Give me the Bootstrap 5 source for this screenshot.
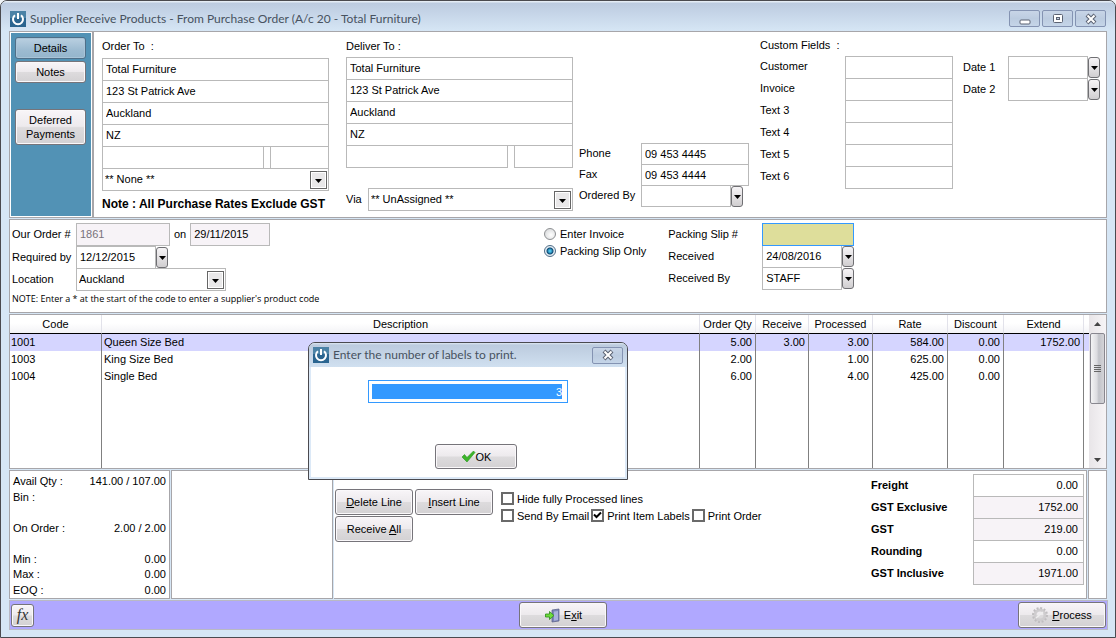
<!DOCTYPE html>
<html lang="en">
<head>
<meta charset="utf-8">
<meta name="viewport" content="width=device-width, initial-scale=1">
<title>Supplier Receive Products</title>
<link href="https://cdn.jsdelivr.net/npm/bootstrap@5.3.0/dist/css/bootstrap.min.css" rel="stylesheet">
<style>
  :root { --line: #a7a6aa; --field: #b9b9b9; --frame: #d6e6f5; --edge: #4a4a4f; }
  body { font: 11px/14px "Liberation Sans", Arial, sans-serif; color: #000; background: #f0f4f8; }
  input, select, button { font: inherit; color: inherit; }
  .app-window { min-height: 100vh; border: 1px solid var(--edge); border-radius: 7px 7px 0 0; background: var(--frame); padding: 0 8px 7px; }
  .title-bar { height: 30px; margin: 0 -8px; padding: 5px 9px 0 9px; border-radius: 6px 6px 0 0; background: linear-gradient(#e4ecf5 0 1px, #bccbe0 2px, var(--frame)); color: #47525f; }
  .title-text { font: 12px/16px Lato, "Open Sans", sans-serif; color: #47525f; }
  .caption-set { gap: 2px; }
  .caption-btn { width: 31px; height: 17px; padding: 0; border: 1px solid #8493b2; border-radius: 2px; background: linear-gradient(#c8d5e7, #bccce0 50%, #c5d5e8); display: flex; align-items: center; justify-content: center; }
  .pane { background: #fff; border: 1px solid var(--line); }
  .stack { gap: 1px; }
  .side { width: 84px; padding: 1px; }
  .side-inner { background: #5292b5; padding: 4px 5px 4px 4px; gap: 2px; }
  .ui-btn { border: 1px solid #76747a; border-radius: 3px; padding: 0; background: linear-gradient(#f8f5f8, #edeaed 48%, #dddbdd 52%, #d3d1d3); box-shadow: inset 0 0 0 1px #faf8fa; text-align: center; min-height: 22px; }
  .ui-btn.current { background: linear-gradient(#bad0e1, #9dbbd1 60%, #94b5cc); border-color: #4f6f88; box-shadow: inset 0 0 0 1px #a9c4d8; }
  .two-line { height: 36px; }
  .tall { height: 26px; }
  .w-action { width: 78px; }
  .w-main { width: 88px; }
  .fld { display: block; height: 23px; border: 1px solid var(--field); border-radius: 0; background: #fff; padding: 0 3px 1px; min-width: 0; outline: 0; }
  .fld.locked { background: #f7f3f7; }
  .fld.dim { color: #77727a; }
  .fld + .fld, .fld-row + .fld, .fld + .fld-row, .fld-row + .fld-row { margin-top: -1px; }
  .combo { appearance: none; padding: 0 22px 1px 2px; background: #fff url("data:image/svg+xml,%3Csvg xmlns='http://www.w3.org/2000/svg' width='17' height='18'%3E%3Crect x='.5' y='.5' width='16' height='17' fill='%23e9e8e9' stroke='%23666'/%3E%3Crect x='1.5' y='1.5' width='14' height='15' fill='none' stroke='%23fff'/%3E%3Cpath d='M5 8h7l-3.5 4z'/%3E%3C/svg%3E") no-repeat right 1px center; }
  .drop { width: 12px; height: 21px; margin-top: 1px; padding: 0; border: 1px solid #6f6f73; border-radius: 3px; background: linear-gradient(#f6f4f6, #e4e2e4 50%, #d0ced0); display: flex; align-items: center; justify-content: center; flex: none; }
  .order-head { padding: 0 2px 6px 8px; }
  .party { width: 227px; padding-top: 7px; }
  .party-title { margin-bottom: 5px; }
  .deliver { margin-left: 17px; }
  .deliver .party-title { margin-bottom: 4px; }
  .rate-note { font-size: 12px; padding-top: 6px; }
  .lab { line-height: 22px; }
  .part-a { width: 162px; }
  .part-b { width: 59px; }
  .via-row { padding-top: 20px; }
  .w-via { width: 205px; }
  .contact { display: grid; grid-template-columns: 62px 108px; margin: 0 0 4px 6px; }
  .contact .fld { height: 22px; margin: 0 0 -1px; }
  .contact .lab { line-height: 20px; }
  .w-drop { width: 90px; }
  .extra { padding-top: 6px; }
  .custom { display: grid; grid-template-columns: 85px 108px; grid-auto-rows: 22px; }
  .custom .lab { line-height: 20px; }
  .dates { display: grid; grid-template-columns: 45px 80px 12px; grid-auto-rows: 22px; margin: 0 4px 0 10px; }
  .order-pane { padding-bottom: 6px; }
  .entry { padding-top: 3px; }
  .order-form { width: 534px; padding-left: 2px; }
  .ref { width: 94px; }
  .w-lab { width: 64px; }
  .w-date { width: 80px; }
  .w-loc { width: 150px; }
  .hint { font: 9px/14px "Open Sans", sans-serif; padding-top: 1px; }
  .kinds { padding-top: 7px; display: flex; flex-direction: column; gap: 3px; }
  .slip { display: grid; grid-template-columns: 94px 80px 12px; grid-auto-rows: 22px; margin-left: 22px; }
  .slip .wanted { grid-column: 2 / 4; background: #dede9b; border-color: #3399ff; position: relative; }
  .radio { appearance: none; width: 12px; height: 12px; margin: 0; border: 1px solid #8d8f92; border-radius: 50%; background: radial-gradient(circle at 60% 60%, #fff, #d0d2d4); flex: none; }
  .radio:checked { border-color: #4e6c86; background: radial-gradient(circle, #49c1ea 0 1px, #0c4a75 3px, #e6eef4 4px); }
  .tick { appearance: none; width: 13px; height: 13px; margin: 0; border: 2px solid #6a6a6a; background: #fff; flex: none; }
  .tick:checked { background: #fff url("data:image/svg+xml,%3Csvg xmlns='http://www.w3.org/2000/svg' width='9' height='9'%3E%3Cpath d='M1 3.5l2.5 2.5L8 1.5' fill='none' stroke='%23000' stroke-width='2'/%3E%3C/svg%3E") center no-repeat; }
  .lines { table-layout: fixed; border-collapse: separate; border-spacing: 0; }
  .col-code { width: 92px; } .col-qty, .col-disc { width: 56px; } .col-recv { width: 53px; } .col-proc { width: 64px; } .col-rate { width: 75px; } .col-ext { width: 80px; } .col-end { width: 5px; }
  .lines th { height: 19px; font-weight: 400; text-align: center; padding: 0; background: linear-gradient(#fff 45%, #f3f3f6); border-bottom: 1px solid #000; border-right: 1px solid #e2e2ea; line-height: 16px; }
  .lines td { height: 17px; line-height: 17px; padding: 0 3px 0 2px; border-right: 1px solid #808080; white-space: nowrap; }
  .lines td.num { text-align: right; }
  .lines td:first-child { padding-left: 1px; }
  .lines td:last-child, .lines th:last-child { border-right: 0; }
  .lines .picked td { background: #d5d5ff; }
  .lines .rest td { height: auto; }
  .scroller { width: 17px; background: linear-gradient(90deg, #e8e5e8, #f6f4f6); }
  .scroll-thumb { width: 15px; height: 71px; border: 1px solid #88878f; border-radius: 2px; background: linear-gradient(90deg, #f4f4f5, #dcdce0 45%, #c2c3c9 60%, #d4d4d8); display: flex; align-items: center; justify-content: center; }
  .stock { width: 161px; padding: 3px 3px 0; }
  .stock dl { display: grid; grid-template-columns: auto 1fr; grid-template-rows: repeat(4, 16px 15px); margin: 0; }
  .stock dt { font-weight: 400; }
  .stock dd { margin: 0; text-align: right; }
  .notes { width: 162px; }
  .work { border-left: 0; }
  .acts { padding: 18px 0 0 1px; gap: 1px; }
  .acts-row { gap: 2px; }
  .ticks { padding: 19px 0 0 8px; }
  .ticks span { padding-left: 3px; }
  .ticks label { height: 17px; }
  .tick-row { gap: 2px; }
  .totals { display: grid; grid-template-columns: 102px 111px; grid-auto-rows: 22px; padding: 3px 2px 13px 0; }
  .totals .fld, .custom .fld, .dates .fld, .slip .fld { margin: 0; width: 100%; }
  .totals .fld { text-align: right; padding-right: 5px; }
  .gutter { width: 19px; }
  .command-bar { background: #b0a8ff; border: 1px solid #b9b9c4; margin-right: -1px; padding: 1px; display: grid; grid-template-columns: 1.02fr 88px 1fr; min-height: 30px; }
  .fx { width: 23px; height: 23px; font: italic 16px/18px "Liberation Serif", serif; color: #333; }
  .prompt { position: absolute; left: 298px; top: 27px; width: 320px; border: 1px solid var(--edge); border-radius: 7px 7px 0 0; background: #dce9f7; padding: 0 2px 2px; z-index: 2; }
  .prompt-head { height: 24px; margin: 0 -2px; padding: 0 4px; border-radius: 6px 6px 0 0; background: linear-gradient(#dfe8f2, #bccbde 2px, #d0e0f0); }
  .prompt-body { background: #fff; height: 110px; padding-top: 13px; gap: 41px; }
  .chosen { width: 200px; height: 23px; border: 1px solid #3399ff; padding: 3px 5px 3px 3px; background: linear-gradient(#39f, #39f) content-box; color: #fff; text-align: right; outline: 0; }
  .confirm { width: 82px; height: 25px; margin-left: 16px; }
</style>
</head>
<body>
<div class="app-window d-flex flex-column">
  <header class="title-bar d-flex align-items-center justify-content-between">
    <div class="d-flex align-items-center gap-1">
      <svg width="16" height="16" viewBox="0 0 16 16" aria-hidden="true"><rect width="16" height="16" fill="#2b6590"/><rect width="16" height="7" fill="#4b82a6"/><path d="M5 4.2a5 5 0 1 0 6 0M8 2v6" fill="none" stroke="#fff" stroke-width="2"/></svg>
      <span class="title-text">Supplier Receive Products - From Purchase Order (A/c 20 - Total Furniture)</span>
    </div>
    <div class="d-flex caption-set">
      <button class="caption-btn" type="button" aria-label="Minimise"><svg width="12" height="12" viewBox="0 0 12 12"><rect x="1" y="7" width="10" height="4" rx="1" fill="#fff" stroke="#5b6272"/></svg></button>
      <button class="caption-btn" type="button" aria-label="Maximise"><svg width="12" height="12" viewBox="0 0 12 12"><rect x="1.5" y="1.5" width="9" height="8" rx="1" fill="#fff" stroke="#5b6272"/><rect x="4.5" y="4.5" width="3" height="2" fill="#c4d2e4" stroke="#5b6272"/></svg></button>
      <button class="caption-btn" type="button" aria-label="Close"><svg width="12" height="12" viewBox="0 0 12 12"><path d="M2 2l8 8M10 2l-8 8" stroke="#5b6272" stroke-width="4"/><path d="M2.5 2.5l7 7M9.5 2.5l-7 7" stroke="#fff" stroke-width="2"/></svg></button>
    </div>
  </header>

  <main class="d-flex flex-column flex-grow-1 stack">
    <section class="d-flex">
      <nav class="pane side d-flex">
        <div class="side-inner d-flex flex-column flex-grow-1">
          <button class="ui-btn current" type="button">Details</button>
          <button class="ui-btn mb-4" type="button">Notes</button>
          <button class="ui-btn two-line" type="button">Deferred<br>Payments</button>
        </div>
      </nav>
      <div class="pane order-head flex-grow-1 d-flex">
        <div class="party">
          <div class="party-title">Order To&nbsp; :</div>
          <div class="d-flex flex-column">
            <input class="fld" aria-label="Name" value="Total Furniture">
            <input class="fld" aria-label="Street" value="123 St Patrick Ave">
            <input class="fld" aria-label="City" value="Auckland">
            <input class="fld" aria-label="Country" value="NZ">
            <div class="d-flex fld-row justify-content-between"><input class="fld part-a" aria-label="Region"><input class="fld part-b m-0" aria-label="Postcode"></div>
            <select class="fld combo" aria-label="Contact"><option>** None **</option></select>
          </div>
          <div class="fw-bold rate-note text-nowrap">Note : All Purchase Rates Exclude GST</div>
        </div>
        <div class="party deliver">
          <div class="party-title">Deliver To :</div>
          <div class="d-flex flex-column">
            <input class="fld" aria-label="Deliver name" value="Total Furniture">
            <input class="fld" aria-label="Deliver street" value="123 St Patrick Ave">
            <input class="fld" aria-label="Deliver city" value="Auckland">
            <input class="fld" aria-label="Deliver country" value="NZ">
            <div class="d-flex fld-row justify-content-between"><input class="fld part-a" aria-label="Deliver region"><input class="fld part-b m-0" aria-label="Deliver postcode"></div>
          </div>
          <div class="d-flex via-row"><label class="lab flex-grow-1" for="via">Via</label><select id="via" class="fld combo w-via"><option>** UnAssigned **</option></select></div>
        </div>
        <div class="contact align-self-end">
          <label class="lab" for="ph">Phone</label><input id="ph" class="fld" value="09 453 4445">
          <label class="lab" for="fax">Fax</label><input id="fax" class="fld" value="09 453 4444">
          <label class="lab" for="oby">Ordered By</label><div class="d-flex"><input id="oby" class="fld w-drop"><button class="drop" type="button" aria-label="Choose person"><svg width="7" height="4"><path d="M0 0h7L3.5 4z"/></svg></button></div>
        </div>
        <div class="ms-auto extra">
          <div>Custom Fields&nbsp; :</div>
          <div class="d-flex align-items-start pt-1">
            <div class="custom">
              <label class="lab" for="c1">Customer</label><input id="c1" class="fld">
              <label class="lab" for="c2">Invoice</label><input id="c2" class="fld">
              <label class="lab" for="c3">Text 3</label><input id="c3" class="fld">
              <label class="lab" for="c4">Text 4</label><input id="c4" class="fld">
              <label class="lab" for="c5">Text 5</label><input id="c5" class="fld">
              <label class="lab" for="c6">Text 6</label><input id="c6" class="fld">
            </div>
            <div class="dates">
              <label class="lab" for="d1">Date 1</label><input id="d1" class="fld"><button class="drop" type="button" aria-label="Pick date 1"><svg width="7" height="4"><path d="M0 0h7L3.5 4z"/></svg></button>
              <label class="lab" for="d2">Date 2</label><input id="d2" class="fld"><button class="drop" type="button" aria-label="Pick date 2"><svg width="7" height="4"><path d="M0 0h7L3.5 4z"/></svg></button>
            </div>
          </div>
        </div>
      </div>
    </section>

    <section class="pane d-flex order-pane">
      <div class="order-form entry">
        <div class="d-flex"><label class="lab w-lab" for="ord">Our Order #</label><input id="ord" class="fld locked dim ref" value="1861" readonly><label class="lab px-1" for="ordd">on</label><input id="ordd" class="fld locked w-date" value="29/11/2015" readonly></div>
        <div class="d-flex fld-row"><label class="lab w-lab" for="req">Required by</label><input id="req" class="fld w-date" value="12/12/2015"><button class="drop" type="button" aria-label="Pick required date"><svg width="7" height="4"><path d="M0 0h7L3.5 4z"/></svg></button></div>
        <div class="d-flex fld-row"><label class="lab w-lab" for="loc">Location</label><select id="loc" class="fld combo w-loc"><option>Auckland</option></select></div>
        <div class="hint">NOTE: Enter a * at the start of the code to enter a supplier's product code</div>
      </div>
      <div class="kinds">
        <label class="d-flex align-items-center"><input class="radio" type="radio" name="kind"><span class="ps-1">Enter Invoice</span></label>
        <label class="d-flex align-items-center"><input class="radio" type="radio" name="kind" checked><span class="ps-1">Packing Slip Only</span></label>
      </div>
      <div class="slip entry">
        <label class="lab" for="ps">Packing Slip #</label><input id="ps" class="fld wanted">
        <label class="lab" for="rc">Received</label><input id="rc" class="fld" value="24/08/2016"><button class="drop" type="button" aria-label="Pick received date"><svg width="7" height="4"><path d="M0 0h7L3.5 4z"/></svg></button>
        <label class="lab" for="rb">Received By</label><input id="rb" class="fld" value="STAFF"><button class="drop" type="button" aria-label="Choose receiver"><svg width="7" height="4"><path d="M0 0h7L3.5 4z"/></svg></button>
      </div>
    </section>

    <section class="pane d-flex flex-grow-1 position-relative">
      <table class="lines flex-grow-1">
        <colgroup><col class="col-code"><col><col class="col-qty"><col class="col-recv"><col class="col-proc"><col class="col-rate"><col class="col-disc"><col class="col-ext"><col class="col-end"></colgroup>
        <thead><tr><th>Code</th><th>Description</th><th>Order Qty</th><th>Receive</th><th>Processed</th><th>Rate</th><th>Discount</th><th>Extend</th><th></th></tr></thead>
        <tbody>
          <tr class="picked"><td>1001</td><td>Queen Size Bed</td><td class="num">5.00</td><td class="num">3.00</td><td class="num">3.00</td><td class="num">584.00</td><td class="num">0.00</td><td class="num">1752.00</td><td></td></tr>
          <tr><td>1003</td><td>King Size Bed</td><td class="num">2.00</td><td></td><td class="num">1.00</td><td class="num">625.00</td><td class="num">0.00</td><td></td><td></td></tr>
          <tr><td>1004</td><td>Single Bed</td><td class="num">6.00</td><td></td><td class="num">4.00</td><td class="num">425.00</td><td class="num">0.00</td><td></td><td></td></tr>
          <tr class="rest"><td></td><td></td><td></td><td></td><td></td><td></td><td></td><td></td><td></td></tr>
        </tbody>
      </table>
      <div class="scroller d-flex flex-column align-items-center" aria-hidden="true">
        <svg width="7" height="18" viewBox="0 0 7 18"><path d="M0 11h7L3.5 7z" fill="#444"/></svg>
        <div class="scroll-thumb"><svg width="7" height="8"><path d="M0 .5h7M0 2.5h7M0 4.5h7M0 6.5h7" stroke="#666"/></svg></div>
        <svg class="mt-auto" width="7" height="16" viewBox="0 0 7 16"><path d="M0 6h7L3.5 10z" fill="#444"/></svg>
      </div>

      <form class="prompt" role="dialog" aria-labelledby="ask">
        <div class="prompt-head d-flex align-items-center">
          <svg width="16" height="16" viewBox="0 0 16 16" aria-hidden="true"><rect width="16" height="16" fill="#2b6590"/><rect width="16" height="7" fill="#4b82a6"/><path d="M5 4.2a5 5 0 1 0 6 0M8 2v6" fill="none" stroke="#fff" stroke-width="2"/></svg>
          <label id="ask" for="qty" class="title-text ps-1 flex-grow-1">Enter the number of labels to print.</label>
          <button class="caption-btn" type="button" aria-label="Close prompt"><svg width="12" height="12" viewBox="0 0 12 12"><path d="M2 2l8 8M10 2l-8 8" stroke="#5b6272" stroke-width="4"/><path d="M2.5 2.5l7 7M9.5 2.5l-7 7" stroke="#fff" stroke-width="2"/></svg></button>
        </div>
        <div class="prompt-body d-flex flex-column align-items-center">
          <input id="qty" class="chosen" value="3">
          <button class="ui-btn confirm d-flex align-items-center justify-content-center" type="button"><svg width="15" height="13" viewBox="0 0 15 13" aria-hidden="true"><path d="M1 7l2.5-2.500L6 7.500 12.500 1 14 2.500 6 12z" fill="#3cb52a" stroke="#2a9420" stroke-width=".6"/></svg><span>OK</span></button>
        </div>
      </form>
    </section>

    <section class="d-flex stack">
      <div class="pane stock">
        <dl><dt>Avail Qty :</dt><dd>141.00 / 107.00</dd><dt>Bin :</dt><dd></dd><dt></dt><dd></dd><dt>On Order :</dt><dd>2.00 / 2.00</dd><dt></dt><dd></dd><dt>Min :</dt><dd>0.00</dd><dt>Max :</dt><dd>0.00</dd><dt>EOQ :</dt><dd>0.00</dd></dl>
      </div>
      <div class="pane notes"></div>
      <div class="pane work flex-grow-1 d-flex">
        <div class="acts d-flex flex-column">
          <div class="d-flex acts-row"><button class="ui-btn tall w-action" type="button"><u>D</u>elete Line</button><button class="ui-btn tall w-action" type="button"><u>I</u>nsert Line</button></div>
          <button class="ui-btn tall w-action" type="button">Receive <u>A</u>ll</button>
        </div>
        <div class="ticks">
          <div class="d-flex"><label class="d-flex align-items-center"><input class="tick" type="checkbox"><span>Hide fully Processed lines</span></label></div>
          <div class="d-flex tick-row"><label class="d-flex align-items-center"><input class="tick" type="checkbox"><span>Send By Email</span></label><label class="d-flex align-items-center"><input class="tick" type="checkbox" checked><span>Print Item Labels</span></label><label class="d-flex align-items-center"><input class="tick" type="checkbox"><span>Print Order</span></label></div>
        </div>
        <div class="totals ms-auto">
          <label class="lab fw-bold" for="t1">Freight</label><input id="t1" class="fld" value="0.00">
          <label class="lab fw-bold" for="t2">GST Exclusive</label><input id="t2" class="fld locked" value="1752.00" readonly>
          <label class="lab fw-bold" for="t3">GST</label><input id="t3" class="fld locked" value="219.00" readonly>
          <label class="lab fw-bold" for="t4">Rounding</label><input id="t4" class="fld" value="0.00">
          <label class="lab fw-bold" for="t5">GST Inclusive</label><input id="t5" class="fld locked" value="1971.00" readonly>
        </div>
      </div>
      <div class="pane gutter"></div>
    </section>

    <footer class="command-bar align-items-center">
      <button class="ui-btn fx" type="button">fx</button>
      <button class="ui-btn tall w-main d-flex align-items-center justify-content-center gap-1" type="button"><svg width="15" height="15" viewBox="0 0 15 15" aria-hidden="true"><path d="M7 2l7-1v12l-7 1z" fill="#7c86b8" stroke="#555c85" stroke-width=".7"/><path d="M9 3.500l4-.6v9l-4 .8z" fill="#aab2dc"/><path d="M.5 6h4V3.500L9 7.500l-4.500 4V9h-4z" fill="#6fdc3c" stroke="#2a8a18" stroke-width=".8"/></svg><span>E<u>x</u>it</span></button>
      <button class="ui-btn tall w-main ms-auto d-flex align-items-center justify-content-center gap-1" type="button"><svg width="16" height="16" viewBox="0 0 16 16" aria-hidden="true"><circle cx="8" cy="8" r="5" fill="none" stroke="#cfcdcf" stroke-width="3"/><circle cx="8" cy="8" r="7" fill="none" stroke="#c0bec0" stroke-width="2" stroke-dasharray="2 1.660"/><path d="M4 11l7-6" stroke="#eee" stroke-width="1.500"/></svg><span><u>P</u>rocess</span></button>
    </footer>
  </main>
</div>
</body>
</html>
